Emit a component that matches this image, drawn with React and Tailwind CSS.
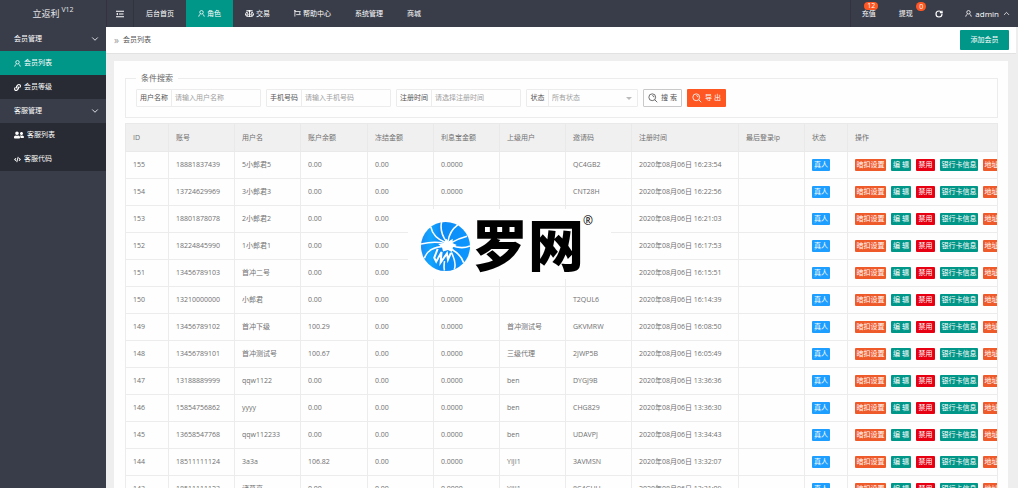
import { FaBalanceScale, FaCode, FaLink, FaUserFriends } from "react-icons/fa";
import { ChevronDown, ChevronUp, RotateCw } from "lucide-react";

function UserIcon({ className }) {
  return (
    <svg viewBox="0 0 16 16" className={className} fill="none" stroke="currentColor" strokeWidth="1.8" aria-hidden="true">
      <circle cx="8" cy="5.2" r="4" />
      <path d="M6 8.8C3.6 10 2 12 1.6 15.2M10 8.8c2.4 1.2 4 3.2 4.4 6.4" />
    </svg>
  );
}

function FlagIcon({ className }) {
  return (
    <svg viewBox="0 0 16 16" className={className} fill="none" stroke="currentColor" strokeWidth="1.8" aria-hidden="true">
      <path d="M2 1v14M0 1.5h4M2 3.5h12.5l-2 3.5 2 3.5H5" />
    </svg>
  );
}

function ShrinkIcon({ className }) {
  return (
    <svg viewBox="0 0 16 16" className={className} fill="none" stroke="currentColor" strokeWidth="2.2" aria-hidden="true">
      <path d="M0 2.5h16M6 8h9M0 13.5h16" />
      <path d="M0 8l4-2.5v5z" fill="currentColor" stroke="none" />
    </svg>
  );
}

function SearchIcon({ className }) {
  return (
    <svg viewBox="0 0 20 20" className={className} fill="none" stroke="currentColor" strokeWidth="1.7" aria-hidden="true">
      <circle cx="8.5" cy="8.5" r="6.8" />
      <path d="M13.5 13.5l5 5M8.5 5a4 4 0 0 1 3.5 3.5" />
    </svg>
  );
}

const NAV = [
  { label: "后台首页" },
  { label: "角色", icon: <UserIcon className="size-[7px]" />, active: true },
  { label: "交易", icon: <FaBalanceScale className="size-[9px]" /> },
  { label: "帮助中心", icon: <FlagIcon className="size-[7px]" /> },
  { label: "系统管理" },
  { label: "商城" },
];

const MENU = [
  {
    label: "会员管理",
    items: [
      { label: "会员列表", icon: <UserIcon className="size-[7px]" />, active: true },
      { label: "会员等级", icon: <FaLink className="size-[7px]" /> },
    ],
  },
  {
    label: "客服管理",
    items: [
      { label: "客服列表", icon: <FaUserFriends className="size-[10px]" /> },
      { label: "客服代码", icon: <FaCode className="size-[7px]" /> },
    ],
  },
];

const COLUMNS = [
  ["ID", "w-[43px]"],
  ["账号", "w-[66px]"],
  ["用户名", "w-[66px]"],
  ["账户余额", "w-[67px]"],
  ["冻结金额", "w-[66px]"],
  ["利息宝金额", "w-[66px]"],
  ["上级用户", "w-[66px]"],
  ["邀请码", "w-[66px]"],
  ["注册时间", "w-[107px]"],
  ["最后登录ip", "w-[66px]"],
  ["状态", "w-[43px]"],
  ["操作", ""],
];

const ROWS = [
  ["155", "18881837439", "5小郎君5", "0.00", "", "QC4GB2", "16:23:54"],
  ["154", "13724629969", "3小郎君3", "0.00", "", "CNT28H", "16:22:56"],
  ["153", "18801878078", "2小郎君2", "0.00", "", "", "16:21:03"],
  ["152", "18224845990", "1小郎君1", "0.00", "", "", "16:17:53"],
  ["151", "13456789103", "首冲二号", "0.00", "", "", "16:15:51"],
  ["150", "13210000000", "小郎君", "0.00", "", "T2QUL6", "16:14:39"],
  ["149", "13456789102", "首冲下级", "100.29", "首冲测试号", "GKVMRW", "16:08:50"],
  ["148", "13456789101", "首冲测试号", "100.67", "三级代理", "2JWP5B", "16:05:49"],
  ["147", "13188889999", "qqw1122", "0.00", "ben", "DYGJ9B", "13:36:36"],
  ["146", "15854756862", "yyyy", "0.00", "ben", "CHG829", "13:36:30"],
  ["145", "13658547768", "qqw112233", "0.00", "ben", "UDAVPJ", "13:34:43"],
  ["144", "18511111124", "3a3a", "106.82", "YIJI1", "3AVMSN", "13:32:07"],
  ["143", "18511111123", "诸葛亮", "0.00", "YIJI1", "8C4GUU", "13:31:09"],
];

const ACTION = "h-3 shrink-0 rounded-[1px] text-center text-white";

function Header() {
  return (
    <header className="flex h-[27px] shrink-0 items-stretch bg-[#393d49] text-white">
      <a href="#home" className="flex w-[106px] items-center justify-center gap-[2px] text-[9px] text-[#e4e5e7]">
        立返利
        <sup className="text-[7px]">V12</sup>
      </a>
      <button aria-label="收起菜单" className="flex w-7 items-center justify-center border-x border-[#31343f]">
        <ShrinkIcon className="size-[8px]" />
      </button>
      <nav className="flex">
        {NAV.map((n) => (
          <a key={n.label} href="#nav" className={`flex items-center gap-[2px] px-3 ${n.active ? "bg-[#009688]" : ""}`}>
            {n.icon}
            {n.label}
          </a>
        ))}
      </nav>
      <div className="ml-auto flex">
        <a href="#recharge" className="relative flex w-[36px] items-center justify-center border-l border-[#31343f]">
          充值
          <span className="absolute top-[2px] left-[13px] h-2 rounded-full bg-[#ff5722] px-[3px] text-[7px] leading-[8px]">12</span>
        </a>
        <a href="#withdraw" className="relative flex w-[39px] items-center justify-center">
          提现
          <span className="absolute top-[2px] -right-[1px] h-[9px] rounded-full bg-[#ff5722] px-[3px] text-[7px] leading-[9px]">0</span>
        </a>
        <button aria-label="刷新" className="flex w-[28px] items-center justify-center">
          <RotateCw className="size-[8px]" strokeWidth={3.5} />
        </button>
        <button className="flex items-center gap-[3px] pr-[7px] pl-3 text-[8px]">
          <UserIcon className="size-[7px]" />
          admin
          <ChevronUp className="size-[9px]" />
        </button>
      </div>
    </header>
  );
}

function Sidebar() {
  return (
    <aside className="w-[106px] shrink-0 bg-[#393d49] text-white">
      {MENU.map((group) => (
        <section key={group.label}>
          <button className="flex h-6 w-full items-center justify-between pr-[6px] pl-[14px]">
            {group.label}
            <ChevronDown className="size-[10px]" />
          </button>
          <ul className="bg-[#282b33]">
            {group.items.map((item) => (
              <li key={item.label}>
                <a href="#menu" className={`flex h-6 items-center gap-[3px] pl-[14px] ${item.active ? "bg-[#009688]" : ""}`}>
                  {item.icon}
                  {item.label}
                </a>
              </li>
            ))}
          </ul>
        </section>
      ))}
    </aside>
  );
}

function Field({ id, label, placeholder }) {
  return (
    <div className="flex h-[18px] w-[125px] rounded-[1px] border border-[#ececec]">
      <label htmlFor={id} className="flex w-[35px] shrink-0 items-center justify-center border-r border-[#ececec]">
        {label}
      </label>
      <input id={id} placeholder={placeholder} className="min-w-0 flex-1 px-[3px] outline-none placeholder:text-[#a0a0a0]" />
    </div>
  );
}

function SearchPanel() {
  return (
    <fieldset className="border border-[#ececec] px-[10px] pt-[6px] pb-[10px]">
      <legend className="px-[5px] text-[8px] leading-[10px] text-[#666]">条件搜索</legend>
      <form className="flex flex-wrap items-center gap-[5px]" onSubmit={(e) => e.preventDefault()}>
        <Field id="username" label="用户名称" placeholder="请输入用户名称" />
        <Field id="phone" label="手机号码" placeholder="请输入手机号码" />
        <Field id="date" label="注册时间" placeholder="请选择注册时间" />
        <div className="relative flex h-[18px] w-[112px] rounded-[1px] border border-[#ececec]">
          <label htmlFor="status" className="flex w-[22px] shrink-0 items-center justify-center border-r border-[#ececec]">
            状态
          </label>
          <select id="status" className="min-w-0 flex-1 appearance-none px-[3px] text-[#a0a0a0] outline-none">
            <option>所有状态</option>
          </select>
          <svg viewBox="0 0 6 3" className="pointer-events-none absolute top-[7px] right-[5px] h-[3px] w-[6px] fill-[#bbb]" aria-hidden="true">
            <path d="M0 0h6L3 3z" />
          </svg>
        </div>
        <button className="flex h-[18px] w-[39px] items-center justify-center gap-[3px] rounded-[1px] border border-[#c9c9c9] text-[#555]">
          <SearchIcon className="size-[10px]" />搜 索
        </button>
        <button className="flex h-[18px] w-[39px] items-center justify-center gap-[3px] rounded-[1px] bg-[#ff5722] text-white">
          <SearchIcon className="size-[10px]" />导 出
        </button>
      </form>
    </fieldset>
  );
}

function MemberTable() {
  return (
    <table className="w-full table-fixed border-collapse text-left text-[#707070]">
      <thead>
        <tr className="h-7 bg-[#f0f0f0]">
          {COLUMNS.map(([name, width]) => (
            <th key={name} className={`border border-[#e9e9e9] px-[7px] font-normal whitespace-nowrap ${width}`}>
              {name}
            </th>
          ))}
        </tr>
      </thead>
      <tbody>
        {ROWS.map(([id, account, name, balance, parent, code, time]) => (
          <tr key={id} className="h-[27px]">
            {[id, account, name, balance, "0.00", "0.0000", parent, code, `2020年08月06日 ${time}`, ""].map((text, i) => (
              <td key={i} className="border border-[#ececec] px-[7px] py-0 whitespace-nowrap">
                {text}
              </td>
            ))}
            <td className="border border-[#ececec] px-[7px] py-0">
              <span className="block h-3 w-[18px] rounded-[1px] bg-[#1e9fff] text-center leading-[12px] text-white">真人</span>
            </td>
            <td className="overflow-hidden border border-[#ececec] py-0 pl-[7px]">
              <div className="flex gap-[5px] leading-[12px] whitespace-nowrap">
                <button className={`${ACTION} w-[31px] bg-[#ef5a2a]`}>暗扣设置</button>
                <button className={`${ACTION} w-[20px] bg-[#009688]`}>编 辑</button>
                <button className={`${ACTION} w-[19px] bg-[#e60012]`}>禁用</button>
                <button className={`${ACTION} w-[38px] bg-[#009688]`}>银行卡信息</button>
                <button className={`${ACTION} w-[31px] bg-[#ef5a2a]`}>地址信息</button>
              </div>
            </td>
          </tr>
        ))}
      </tbody>
    </table>
  );
}

function Watermark() {
  return (
    <div className="pointer-events-none absolute top-[209px] left-[408px] flex h-[70px] w-[203px] items-center bg-[#fefefe] pl-[13px] text-black">
      <svg viewBox="0 0 100 100" className="mt-[5px] size-[49px] shrink-0" aria-hidden="true">
        <defs>
          <linearGradient id="orb" x1="0" x2="1">
            <stop offset="0" stopColor="#1a8cf5" />
            <stop offset="0.2" stopColor="#12a6ff" />
            <stop offset="0.4" stopColor="#0d8bf5" />
            <stop offset="1" stopColor="#0c96ff" />
          </linearGradient>
        </defs>
        <circle cx="50" cy="50" r="50" fill="url(#orb)" />
        <g fill="none" stroke="#fff" strokeWidth="3.2">
          <path d="M50 42C35 36 23 25 20 10" />
          <path d="M52 40C43 28 39 14 42 0" />
          <path d="M55 40C57 27 64 14 75 6" />
          <path d="M60 43C70 37 82 32 94 29" />
          <path d="M48 44C32 39 16 41 0 45" />
          <path d="M46 50C28 50 12 58 7 74" />
          <path d="M60 47C74 53 88 54 100 49" />
          <path d="M60 54C74 62 84 72 87 83" />
          <path d="M62 62C68 74 72 86 68 97" />
          <path d="M48 80C47 87 46 93 48 99" />
        </g>
        <path d="M52 34l4 6 9-6-1 9 9 4-8 5-2 9-8-4-10 3-2-8-8-7 11-1z" fill="#fff" />
        <path d="M34 55l-7 18 4 8 11-20-2 22 13-19 2 13 6-14" fill="none" stroke="#fff" strokeWidth="4" strokeLinejoin="miter" />
      </svg>
      <span className="ml-[2px] text-[56px] leading-[70px] font-black">罗网</span>
      <span className="-ml-[1px] self-start pt-[5px] text-[12px] leading-[14px]">®</span>
    </div>
  );
}

export default function App() {
  return (
    <div className="relative flex h-screen flex-col overflow-hidden bg-[#eeeeee] font-['Open_Sans','Noto_Sans_CJK_SC',sans-serif] text-[7px] leading-[10px] text-[#555]">
      <Header />
      <div className="flex min-h-0 flex-1">
        <Sidebar />
        <main className="min-w-0 flex-1">
          <div className="mr-[2px] flex h-[27px] items-center justify-between border-b border-[#e2e2e2] bg-white pr-[7px] pl-2">
            <h1 className="flex items-center gap-1">
              <span className="text-[10px] text-[#999]">»</span>
              会员列表
            </h1>
            <button className="h-5 w-[49px] rounded-[1px] bg-[#009688] text-white">添加会员</button>
          </div>
          <div className="mt-[7px] mr-[10px] ml-2 flex flex-col gap-[5px] bg-[#fefefe] pt-3 pr-[10px] pl-[11px]">
            <SearchPanel />
            <MemberTable />
          </div>
        </main>
      </div>
      <Watermark />
    </div>
  );
}
